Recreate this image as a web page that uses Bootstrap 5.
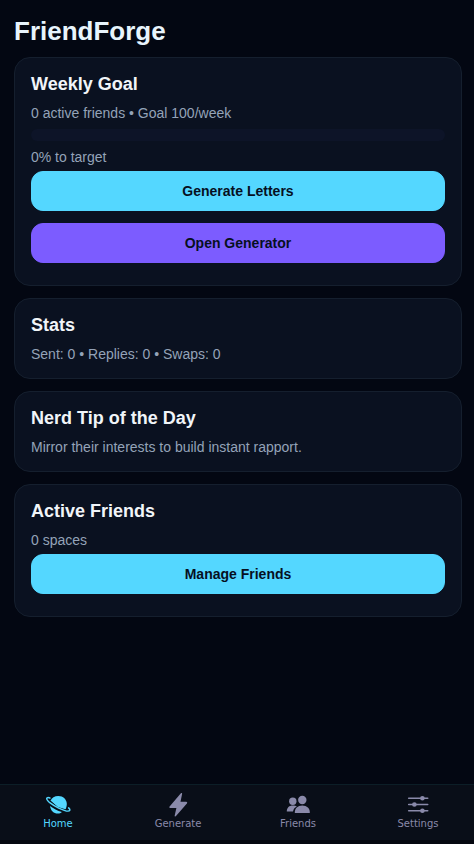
<!DOCTYPE html>
<html lang="en">
<head>
<meta charset="utf-8">
<meta name="viewport" content="width=device-width, initial-scale=1">
<title>FriendForge</title>
<link rel="stylesheet" href="https://cdn.jsdelivr.net/npm/bootstrap@5.3.0/dist/css/bootstrap.min.css">
<style>
  body { background: #030712; color: #f1f5f9; font: 14px/16px "Liberation Sans", Arial, sans-serif; }
  main { padding: 16px 12px 80px 14px; }
  h1 { font-size: 26px; line-height: 30px; font-weight: 700; margin: 0 0 11px; color: #e8f4fc; }
  .panel { --bs-card-bg: #0a1120; --bs-card-color: #f1f5f9; --bs-card-border-color: #151f2e; --bs-card-border-radius: 16px; padding: 16px; margin-bottom: 12px; }
  .panel h2 { font-size: 18px; line-height: 21px; font-weight: 700; margin: 0 0 10px; }
  .panel p { color: #94a3b8; margin: 0; }
  .goal-bar { --bs-progress-height: 12px; --bs-progress-bg: #0d1428; --bs-progress-border-radius: 8px; margin: 8px 0; }
  .action { --bs-btn-font-size: 14px; --bs-btn-font-weight: 700; --bs-btn-line-height: 18px; --bs-btn-padding-y: 10px; --bs-btn-border-radius: 12px; --bs-btn-color: #06101f; --bs-btn-hover-color: #06101f; --bs-btn-active-color: #06101f; margin: 6px 0; }
  .action-cyan { --bs-btn-bg: #54d7ff; --bs-btn-border-color: #54d7ff; --bs-btn-hover-bg: #7be1ff; --bs-btn-active-bg: #3cc8f2; }
  .action-violet { --bs-btn-bg: #7c5cff; --bs-btn-border-color: #7c5cff; --bs-btn-hover-bg: #957bff; --bs-btn-active-bg: #6b49f5; }
  .tabs { background: #090e18; border-top: 1px solid #0c1e27; border-bottom: 4px solid #05070f; padding: 7px 16px 10px 18px; }
  .tabs a { width: 80px; color: #8a8aaa; font: 10px/12px "DejaVu Sans", sans-serif; text-decoration: none; }
  .tabs a.active { color: #54d7ff; }
  .tabs svg { width: 26px; height: 26px; }
</style>
</head>
<body>
<main>
  <h1>FriendForge</h1>

  <section class="card panel">
    <h2>Weekly Goal</h2>
    <p>0 active friends • Goal 100/week</p>
    <div class="progress goal-bar" role="progressbar" aria-label="Weekly goal" aria-valuenow="0" aria-valuemin="0" aria-valuemax="100">
      <div class="progress-bar" style="width: 0%"></div>
    </div>
    <p>0% to target</p>
    <button type="button" class="btn action action-cyan">Generate Letters</button>
    <button type="button" class="btn action action-violet">Open Generator</button>
  </section>

  <section class="card panel">
    <h2>Stats</h2>
    <p>Sent: 0 • Replies: 0 • Swaps: 0</p>
  </section>

  <section class="card panel">
    <h2>Nerd Tip of the Day</h2>
    <p>Mirror their interests to build instant rapport.</p>
  </section>

  <section class="card panel">
    <h2>Active Friends</h2>
    <p>0 spaces</p>
    <button type="button" class="btn action action-cyan">Manage Friends</button>
  </section>
</main>

<nav class="tabs fixed-bottom d-flex justify-content-between" aria-label="Main">
  <a href="#home" class="active d-flex flex-column align-items-center" aria-current="page">
    <svg viewBox="0 0 26 26" fill="currentColor" aria-hidden="true">
      <path d="M5.600 8.600C6.600 5.800 9.600 3.900 13.300 3.900c4.900 0 8.500 3.500 8.500 8.100 0 2.100-.5 3.700-1.400 5.200L13 15z"/>
      <path d="M5 13.900c3.300 2.500 7.500 4.700 11.900 6.100-1.200 1-2.400 1.500-4 1.500-4.200 0-7.300-3.100-7.900-7.600z"/>
      <path d="M4.900 6C2.900 5.300 1.800 5.600 1.700 6.500c-.2 2.300 6.200 6.900 12 9.600 4.900 2.300 10.200 4 11 2.300.4-.8-.1-1.600-1.100-2.500" fill="none" stroke="currentColor" stroke-width="1.500" stroke-linecap="round"/>
      <path d="M5.500 8.200L13 14.500l8 2.300-.5-4.800-9-5z"/>
    </svg>
    <span>Home</span>
  </a>
  <a href="#generate" class="d-flex flex-column align-items-center">
    <svg viewBox="0 0 26 26" fill="currentColor" aria-hidden="true">
      <path d="M15.900 1.200c.7-.5 1.400 0 1.200.8L15.500 9.800h5.700c1 0 1.300.8.7 1.600L11 24.100c-.7.7-1.600.2-1.300-.7l1.700-7.400H5.200c-.9 0-1.200-.8-.6-1.500z"/>
    </svg>
    <span>Generate</span>
  </a>
  <a href="#friends" class="d-flex flex-column align-items-center">
    <svg viewBox="0 0 26 26" fill="currentColor" aria-hidden="true">
      <circle cx="7.800" cy="9.200" r="3.700"/>
      <path d="M1.800 19.500c0-3.900 2.400-6 6-6 1.700 0 3 .4 4 1-2.300 1.100-3.400 2.800-3.800 5z"/>
      <circle cx="17.300" cy="8" r="4.200"/>
      <path d="M9.800 21c-.2-4.600 2.900-7.400 7.500-7.400S25 16.400 24.800 21z"/>
    </svg>
    <span>Friends</span>
  </a>
  <a href="#settings" class="d-flex flex-column align-items-center">
    <svg viewBox="0 0 26 26" fill="currentColor" aria-hidden="true">
      <path d="M3.700 6.300h19M3.700 12.500h19M3.700 18.700h19" stroke="currentColor" stroke-width="1.600" stroke-linecap="round"/>
      <circle cx="17.400" cy="6.300" r="2.300"/><circle cx="9.400" cy="12.500" r="2.300"/><circle cx="17.400" cy="18.700" r="2.300"/>
    </svg>
    <span>Settings</span>
  </a>
</nav>
<script src="https://cdn.jsdelivr.net/npm/bootstrap@5.3.0/dist/js/bootstrap.bundle.min.js"></script>
</body>
</html>
